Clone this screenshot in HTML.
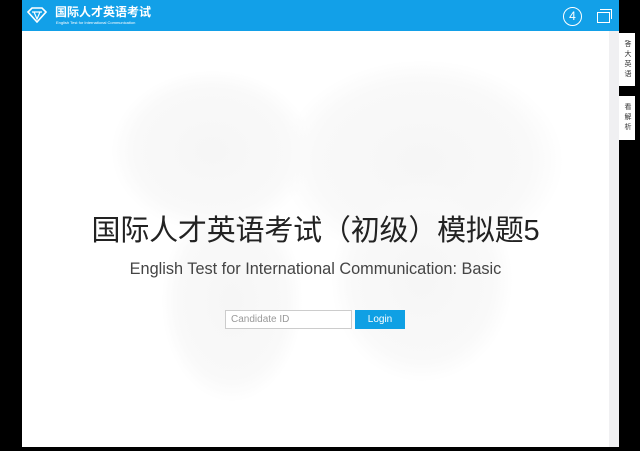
<!DOCTYPE html>
<html><head><meta charset="utf-8"><style>
html,body{margin:0;padding:0;width:640px;height:451px;overflow:hidden;background:#000;font-family:"Liberation Sans","Noto Sans CJK SC",sans-serif;}
#hdr{position:absolute;left:22px;top:0;width:597px;height:31px;background:#12a0e8;}
#main{position:absolute;left:22px;top:31px;width:587px;height:416px;background:#fff;overflow:hidden;}
#sb{position:absolute;left:609px;top:31px;width:10px;height:416px;background:#f0f0f2;}
.map{position:absolute;border-radius:50%;background:radial-gradient(#f6f6f6 0,#f9f9f9 55%,rgba(255,255,255,0) 72%);}
.tab{position:absolute;left:619px;width:16px;background:#fff;font-size:7px;color:#333;writing-mode:vertical-rl;text-align:center;line-height:16px;letter-spacing:3px;}
</style></head><body>
<div id="hdr">
<svg style="position:absolute;left:5px;top:7px" width="20" height="16" viewBox="0 0 20 16"><path d="M1 5 L5 1 H15 L19 5 L10 15 Z" fill="none" stroke="#fff" stroke-width="1.6"/><path d="M5 5 H15 M7 5 L10 12 L13 5" fill="none" stroke="#fff" stroke-width="1.2"/></svg>
<div style="position:absolute;left:33px;top:6px;color:#fff;font-size:12px;font-weight:bold;line-height:13px">国际人才英语考试</div>
<div style="position:absolute;left:34px;top:20px;color:#fff;font-size:4px;line-height:5px;white-space:nowrap">English Test for International Communication</div>
<div style="position:absolute;left:541px;top:7px;width:17px;height:17px;border:1px solid #fff;border-radius:50%;color:#fff;font-size:12px;line-height:17px;text-align:center">4</div>
<div style="position:absolute;left:575px;top:12px;width:11px;height:9px;border:1.5px solid #fff"></div>
<div style="position:absolute;left:578px;top:9px;width:11px;height:9px;border-top:1.5px solid #fff;border-right:1.5px solid #fff"></div>
</div>
<div id="main">
<div class="map" style="left:90px;top:40px;width:200px;height:160px"></div>
<div class="map" style="left:260px;top:30px;width:280px;height:200px"></div>
<div class="map" style="left:140px;top:170px;width:140px;height:200px"></div>
<div class="map" style="left:310px;top:150px;width:180px;height:200px"></div>
<div style="position:absolute;left:0;top:181px;width:587px;text-align:center;font-size:29px;color:#222;line-height:38px;letter-spacing:-0.2px">国际人才英语考试（初级）模拟题5</div>
<div style="position:absolute;left:0;top:228px;width:587px;text-align:center;font-size:16.3px;color:#444;line-height:20px">English Test for International Communication: Basic</div>
<div style="position:absolute;left:203px;top:279px;height:17px;border:1px solid #ccc;background:#fff;font-size:10px;color:#999;line-height:17px;padding-left:5px;width:120px">Candidate ID</div>
<div style="position:absolute;left:333px;top:279px;width:50px;height:19px;background:#0fa0e4;color:#fff;font-size:10px;line-height:19px;text-align:center">Login</div>
</div>
<div id="sb"></div>
<div class="tab" style="top:33px;height:53px">答大英语</div>
<div class="tab" style="top:96px;height:44px">看解析</div>
</body></html>
